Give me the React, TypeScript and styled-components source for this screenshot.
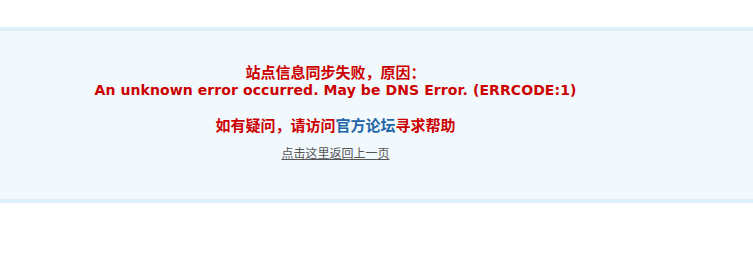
import React from 'react'
import styled, { createGlobalStyle } from 'styled-components'

const GlobalStyle = createGlobalStyle`
    body {
        margin: 0;
        background: #fff;
        font-family: "DejaVu Sans", "Noto Sans CJK SC", sans-serif;
    }
`

const Page = styled.div`
    padding-top: 27px;
`

const InfoBox = styled.div`
    border-top: 4px solid #deeffa;
    border-bottom: 4px solid #deeffa;
    background: #f2f9fd;
    box-sizing: border-box;
    height: 176px;
    padding: 32px 82px 0 0;
    text-align: center;
`

const InfoTitle = styled.h3`
    margin: 0;
    color: #c00;
    font-weight: 700;
`

const CnLine = styled.div`
    font-family: "Noto Sans CJK SC", sans-serif;
    font-size: 15px;
    line-height: 17px;
`

const EnLine = styled.div`
    margin-top: 2px;
    font-family: "DejaVu Sans", sans-serif;
    font-size: 14px;
    line-height: 17px;
    letter-spacing: 0.09px;
`

const Help = styled.p`
    margin: 16px 0 8px;
    font-family: "Noto Sans CJK SC", sans-serif;
    font-size: 15px;
    line-height: 20px;
    font-weight: 700;
    color: #c00;
`

const ForumLink = styled.a`
    color: #2366a8;
    text-decoration: none;
`

const BackLink = styled.a`
    display: inline-block;
    font-family: "Noto Sans CJK SC", sans-serif;
    font-size: 12px;
    line-height: 16px;
    color: #555;
    text-decoration: underline;
`

export default function App() {
    return (
        <Page>
            <GlobalStyle />
            <InfoBox>
                <InfoTitle>
                    <CnLine>站点信息同步失败，原因：</CnLine>
                    <EnLine>An unknown error occurred. May be DNS Error. (ERRCODE:1)</EnLine>
                </InfoTitle>
                <Help>
                    如有疑问，请访问<ForumLink href="#">官方论坛</ForumLink>寻求帮助
                </Help>
                <BackLink href="#">点击这里返回上一页</BackLink>
            </InfoBox>
        </Page>
    )
}
